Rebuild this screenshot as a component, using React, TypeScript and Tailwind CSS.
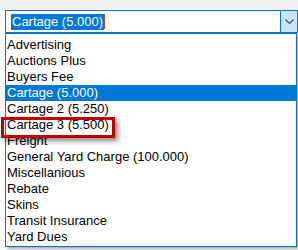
import React from "react";

const items = [
  "Advertising",
  "Auctions Plus",
  "Buyers Fee",
  "Cartage (5.000)",
  "Cartage 2 (5.250)",
  "Cartage 3 (5.500)",
  "Freight",
  "General Yard Charge (100.000)",
  "Miscellanious",
  "Rebate",
  "Skins",
  "Transit Insurance",
  "Yard Dues",
];

export default function App() {
  return (
    <div
      className="relative w-[298px] h-[250px] bg-white overflow-hidden text-[13px] text-black"
      style={{ fontFamily: '"Liberation Sans", Arial, sans-serif' }}
    >
      <div className="h-[10px] bg-[#f0f0f0]" />
      <div className="ml-[5px] w-[293px] h-[23px] border border-[#0078d7] flex">
        <div className="flex-1 flex items-center pl-[5px]">
          <span className="bg-[#0078d7] text-white px-[1px] h-[16px] leading-[16px]">
            Cartage (5.000)
          </span>
          <span className="w-[1px] h-[15px] bg-[#c05000]" />
        </div>
        <div className="w-[17px] bg-[#cce4f7] border-l border-[#0078d7] flex items-center justify-center">
          <svg width="9" height="6" viewBox="0 0 9 6">
            <path d="M0.5 0.5 L4.5 4.5 L8.5 0.5" fill="none" stroke="#505050" strokeWidth="1.2" />
          </svg>
        </div>
      </div>

      <div className="absolute left-[5px] top-[33px] w-[292px] h-[214px] bg-white border border-[#0078d7] pt-[3px] shadow-[2px_2px_3px_rgba(0,0,0,0.35)]">
        {items.map((it, i) => (
          <div
            key={it}
            className={
              "h-[16px] leading-[16px] pl-[1px] whitespace-nowrap " +
              (i === 3 ? "bg-[#0078d7] text-white" : "")
            }
          >
            {it}
          </div>
        ))}
      </div>

      <div className="absolute left-[1px] top-[117px] w-[114px] h-[21px] border-[3px] border-[#c00000] shadow-[3px_3px_5px_rgba(0,0,0,0.45)]" />
    </div>
  );
}
